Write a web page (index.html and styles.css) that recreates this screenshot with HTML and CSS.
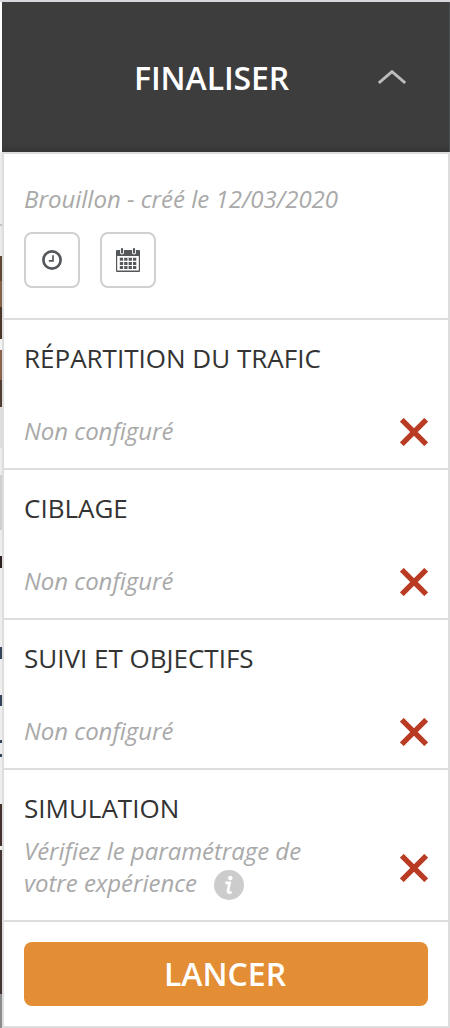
FILE: index.html
```
<!DOCTYPE html>
<html lang="fr">
<head>
<meta charset="utf-8">
<title>Finaliser</title>
<link rel="stylesheet" href="styles.css">
</head>
<body>
<svg class="symbols" width="0" height="0" aria-hidden="true">
  <symbol id="cross" viewBox="0 0 28 28"><path d="M1.8 1.8 26.2 26.2M26.2 1.8 1.8 26.2" fill="none" stroke="#b93b24" stroke-width="5.4"/></symbol>
</svg>
<div class="page">
  <div class="backdrop"></div>
  <main class="panel">
    <header class="header">
      <h1 class="header-title">FINALISER</h1>
      <svg class="chevron" viewBox="0 0 28 14"><path d="M.8 13 14 1.6 27.2 13" fill="none" stroke="#bcbcbc" stroke-width="2.8"/></svg>
    </header>
    <div class="content">
      <section class="draft">
        <p class="note draft-note">Brouillon - créé le 12/03/2020</p>
        <div class="tools">
          <button class="tool" aria-label="Historique">
            <svg width="20" height="20" viewBox="0 0 20 20" fill="none" stroke="#55585b"><circle cx="10" cy="10" r="8.6" stroke-width="2.7"/><path d="M11 5.2V10.9H6.8" stroke-width="1.7"/></svg>
          </button>
          <button class="tool" aria-label="Calendrier">
            <svg width="24" height="24" viewBox="0 0 24 24">
              <path fill="#55585b" fill-rule="evenodd" d="M1 2H23Q24 2 24 3V23Q24 24 23 24H1Q0 24 0 23V3Q0 2 1 2ZM1.2 8V22.5H22.8V8Z"/>
              <path stroke="#fff" stroke-width="4" stroke-linecap="round" d="M6 1V4.5M18 1V4.5"/>
              <path stroke="#55585b" stroke-width="2.2" stroke-linecap="round" d="M6 1.2V4.5M18 1.2V4.5"/>
              <path stroke="#55585b" stroke-width="3" stroke-dasharray="3.3 1.1" d="M3.8 11.3H20.4M3.8 15.4H20.4M3.8 19.5H20.4"/>
            </svg>
          </button>
        </div>
      </section>
      <section class="step">
        <h2 class="step-title">RÉPARTITION DU TRAFIC</h2>
        <div class="status"><p class="note">Non configuré</p><svg class="cross"><use href="#cross"/></svg></div>
      </section>
      <section class="step">
        <h2 class="step-title">CIBLAGE</h2>
        <div class="status"><p class="note">Non configuré</p><svg class="cross"><use href="#cross"/></svg></div>
      </section>
      <section class="step">
        <h2 class="step-title">SUIVI ET OBJECTIFS</h2>
        <div class="status"><p class="note">Non configuré</p><svg class="cross"><use href="#cross"/></svg></div>
      </section>
      <section class="step simulation">
        <h2 class="step-title">SIMULATION</h2>
        <div class="status">
          <div class="description">
            <p class="note">Vérifiez le paramétrage de</p>
            <div class="second-line"><p class="note">votre expérience</p>
              <svg class="info" viewBox="0 0 30 30"><circle cx="15" cy="15" r="15" fill="#ccc"/><circle cx="16.3" cy="8" r="2.3" fill="#fff"/><path d="M11.3 12.8H15.6L14 20.8Q13.6 23.6 17.6 22" fill="none" stroke="#fff" stroke-width="2.7"/></svg>
            </div>
          </div>
          <svg class="cross"><use href="#cross"/></svg>
        </div>
      </section>
      <footer class="footer"><button class="launch">LANCER</button></footer>
    </div>
  </main>
</div>
</body>
</html>
```
FILE: styles.css
```
* { box-sizing: border-box; }
body { margin: 0; font-family: "Open Sans", sans-serif; background: #fff; }
h1, h2, p { margin: 0; }
.symbols { position: absolute; }
.page { display: flex; height: 1028px; border-top: 2px solid #d8d8dc; overflow: hidden; }
.backdrop {
  width: 2px;
  background: linear-gradient(
    #fff 0 150px, #ebebeb 150px 222px, #c2c2c2 222px 224px, #ebebeb 224px 254px,
    #604735 254px 279px, #84634b 279px 305px, #4b3527 305px 337px, #f3f3f3 337px 348px,
    #886249 348px 378px, #513d32 378px 405px, #dedede 405px 446px,
    #ededed 446px 473px, #cfcfcf 473px 528px, #eee 528px 554px,
    #2d211f 554px 566px, #eee 566px 645px, #34445a 645px 657px,
    #eee 657px 693px, #34445a 693px 704px, #eee 704px 738px,
    #34445a 738px 741px, #eee 741px 752px, #34445a 752px 755px,
    #eee 755px 802px, #44312e 802px 844px, #eee 844px 848px,
    #443431 848px 992px, #8d8d90 992px 1026px);
}
.panel { width: 448px; }
.header {
  height: 150px; padding: 0 44px 0 132px;
  display: flex; align-items: center; justify-content: space-between;
  background: linear-gradient(#3d3d3d 0 142px, #353535);
  border-right: 1px solid #4a4d4d;
}
.header-title { color: #fff; font-size: 32px; font-weight: 600; line-height: 44px; padding-top: 2px; white-space: nowrap; letter-spacing: -0.1px; }
.chevron { width: 28px; height: 14px; margin-right: -1px; }
.content { height: 876px; border: 2px solid #ddd; background: #fff; }
.note { color: #a9a9a9; font-size: 24px; font-style: italic; line-height: 32px; white-space: nowrap; letter-spacing: -0.04px; }
.draft-note { letter-spacing: 0; }
.draft { height: 166px; padding: 29px 20px 0; border-bottom: 2px solid #ddd; }
.tools { display: flex; gap: 20px; margin-top: 17px; }
.tool { width: 56px; height: 56px; padding: 0; display: grid; place-items: center; background: #fff; border: 2px solid #d0d0d0; border-radius: 8px; }
.step { height: 150px; padding: 20px 18px 0 20px; border-bottom: 2px solid #ddd; }
.step-title { color: #333; font-size: 26px; font-weight: 400; line-height: 36px; white-space: nowrap; }
.status { display: flex; align-items: center; justify-content: space-between; margin-top: 39px; height: 34px; }
.status > .note { padding-bottom: 2px; }
.cross { width: 28px; height: 28px; margin-right: 2px; }
.simulation { height: 152px; }
.simulation .status { height: 64px; margin-top: 10px; }
.description { padding-bottom: 2px; }
.second-line { display: flex; align-items: center; gap: 17px; }
.info { width: 30px; height: 30px; margin-top: 3px; margin-bottom: -1px; }
.footer { padding: 20px; }
.launch { width: 404px; height: 64px; border: 0; border-radius: 8px; background: #e38d34; color: #fff; font: 600 32px/64px "Open Sans", sans-serif; padding: 0 2px 0 0; }
```
